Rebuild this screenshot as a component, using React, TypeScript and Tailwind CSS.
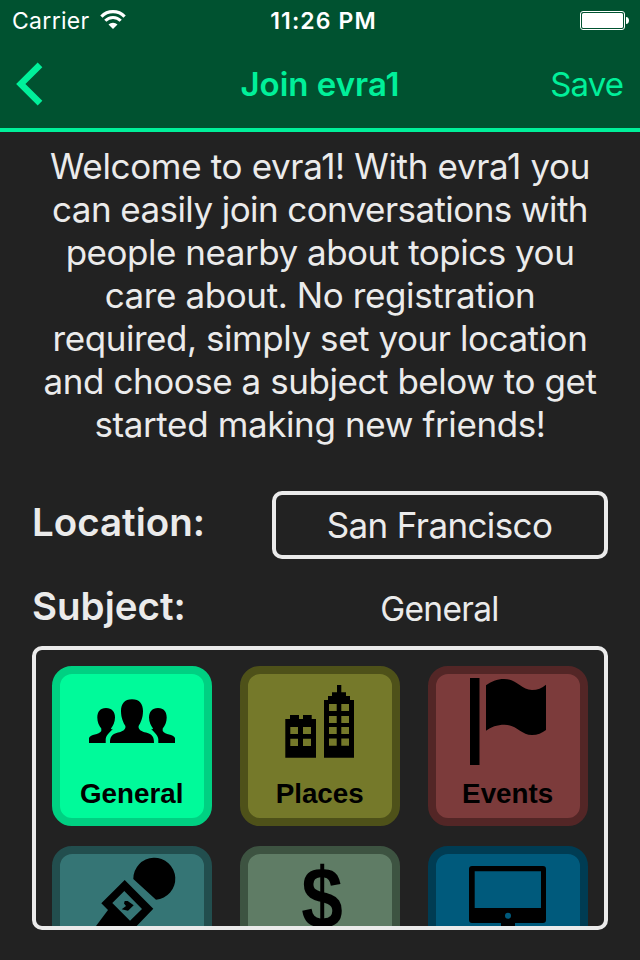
import type { ReactNode } from 'react';

type Subject = {
  label?: string;
  tile: string;
  icon: ReactNode;
};

const intro = [
  { text: 'Welcome to evra1! With evra1 you', spacing: 'tracking-[-0.34px]' },
  { text: 'can easily join conversations with', spacing: 'tracking-[-0.58px]' },
  { text: 'people nearby about topics you', spacing: 'tracking-[-0.48px]' },
  { text: 'care about. No registration', spacing: 'tracking-[-0.4px]' },
  { text: 'required, simply set your location', spacing: 'tracking-[-0.45px]' },
  { text: 'and choose a subject below to get', spacing: 'tracking-[-0.45px]' },
  { text: 'started making new friends!', spacing: 'tracking-[-0.38px]' },
];

const subjects: Subject[] = [
  {
    label: 'General',
    tile: 'bg-[#00fa9a] border-[#00d082]',
    icon: (
      <>
        <path d="M80 33.3C87.500 33.300 91 38 91 45C91 52 88.500 57 86.600 60C86 64 90 65.500 94 66.600C100.500 68.500 102 71 102 77H58C58 71 59.500 68.500 66 66.600C70 65.500 74 64 73.400 60C71.500 57 69 52 69 45C69 38 72.500 33.300 80 33.300Z" />
        <path d="M54 42C60 42 63 46 63 51.500C63 56 61 60 59 62.500C59 63.500 60.500 63.500 61.500 62C58.500 66 54.500 68 53.700 73V77H37V72C38.500 68 47 69 49.300 65V62.500C47 60 45.300 56 45.300 51.500C45.300 46 48 42 54 42Z" />
        <path d="M106 42C100 42 97 46 97 51.500C97 56 99 60 101 62.500C101 63.500 99.500 63.500 98.500 62C101.500 66 105.500 68 106.300 73V77H123V72C121.500 68 113 69 110.700 65V62.500C113 60 114.700 56 114.700 51.500C114.700 46 112 42 106 42Z" />
      </>
    ),
  },
  {
    label: 'Places',
    tile: 'bg-[#75792a] border-[#4e5119]',
    icon: (
      <path
        fillRule="evenodd"
        d="M45.300 53H50V49H59V53H63V49H71.700V53H76V91.700H45.300ZM50.300 61V68H58V61ZM63 61V68H71V61ZM50.300 72.700V80H58V72.700ZM63 72.700V80H71V72.700ZM84 34H88V30H92V26.300H97V19H101.300V26.300H106V30H110V34H114V91.700H84ZM89 38V45H96.700V38ZM101.300 38V45H109V38ZM89 50V57H96.700V50ZM101.300 50V57H109V50ZM89 61V68H96.700V61ZM101.300 61V68H109V61ZM89 72.500V79.700H96.700V72.500ZM101.300 72.500V79.700H109V72.500Z"
      />
    ),
  },
  {
    label: 'Events',
    tile: 'bg-[#7c3b3b] border-[#532626]',
    icon: (
      <>
        <rect x="42" y="12" width="9.500" height="87" />
        <path d="M58 19.300C63 15.500 69 13 76 13C89 13 93 24 104 24C109.500 24 114 22 118 18.700V64C114 67 109.500 69 104 69C93 69 89 58.700 76.500 58.700C69 58.700 63 61 58 64.700Z" />
      </>
    ),
  },
  {
    tile: 'bg-[#357575] border-[#224e4e]',
    icon: (
      <>
        <path d="M81.300 33A21 21 0 1 1 104 53.700Z" />
        <path
          fillRule="evenodd"
          d="M72.700 34L101.300 62.700L84.700 80L64 100H30L44 80L56 64L49.300 57.300ZM72.300 45L60.300 57L78 74.700L90 63Z"
        />
        <path d="M72.700 55H75.700L81.700 59.300L76 64.700L69.700 63.300L74 60L72 57.500Z" />
      </>
    ),
  },
  {
    tile: 'bg-[#5f7c65] border-[#3d5341]',
    icon: (
      <text
        transform="translate(82 83) scale(0.89 1.03)"
        textAnchor="middle"
        className="font-['Liberation_Sans',sans-serif] text-[84px] font-bold"
      >
        $
      </text>
    ),
  },
  {
    tile: 'bg-[#005a7c] border-[#003c53]',
    icon: (
      <path
        fillRule="evenodd"
        d="M44 20H115A3 3 0 0 1 118 23V74A3 3 0 0 1 115 77H87V90H73V77H44A3 3 0 0 1 41 74V23A3 3 0 0 1 44 20ZM46.700 25.300V62H113V25.300ZM80 66.700A3 3 0 1 0 80 72.700A3 3 0 1 0 80 66.700Z"
      />
    ),
  },
];

function StatusBar() {
  return (
    <div className="grid h-10 grid-cols-3 items-center text-white">
      <div className="flex items-center gap-[10px] pl-3">
        <span className="pt-0.5 text-[23px] leading-[38px] tracking-[0.3px]">Carrier</span>
        <svg width="26" height="20" viewBox="0 0 26 20" fill="none" stroke="currentColor">
          <path d="M1.400 6.700A16 16 0 0 1 24.600 6.700" strokeWidth="3.200" />
          <path d="M5.300 10.800A10.500 10.500 0 0 1 20.700 10.800" strokeWidth="3" />
          <path d="M13 19L8.500 14.600A6.200 6.200 0 0 1 17.500 14.600Z" fill="currentColor" stroke="none" />
        </svg>
      </div>
      <span className="whitespace-nowrap pl-[7px] pt-0.5 text-center text-[23px] font-semibold leading-[38px] tracking-[1.1px]">
        11:26 PM
      </span>
      <div className="flex justify-end pr-[10px] pt-px">
        <svg width="50" height="20" viewBox="0 0 50 20">
          <rect x="0.500" y="0.500" width="44" height="18" rx="2.500" fill="none" stroke="white" />
          <rect x="2" y="2" width="41" height="15" rx="1.500" fill="white" />
          <path d="M46 6C50 6 50 13 46 13Z" fill="white" />
        </svg>
      </div>
    </div>
  );
}

function SubjectTile({ label, tile, icon }: Subject) {
  return (
    <button className={`h-40 w-40 overflow-hidden rounded-[20px] border-8 ${tile}`}>
      <svg width="160" height="160" viewBox="0 0 160 160" className="-m-2 max-w-none">
        {icon}
        {label && (
          <text
            x="79.700"
            y="136.700"
            textAnchor="middle"
            className="font-['Liberation_Sans',sans-serif] text-[27.8px] font-bold"
          >
            {label}
          </text>
        )}
      </svg>
    </button>
  );
}

export default function App() {
  return (
    <div className="flex h-[960px] w-[640px] flex-col overflow-hidden bg-[#222222] font-['Inter',sans-serif] text-[#ebebeb]">
      {/* Header */}
      <header className="h-[132px] border-b-4 border-[#00f09a] bg-[#005230] text-[#00f09a]">
        <StatusBar />
        <nav className="grid h-[88px] grid-cols-3 items-center px-4">
          <svg width="28" height="44" viewBox="0 0 28 44" fill="none" stroke="currentColor">
            <path d="M24 2.800L4.800 22L24 41.200" strokeWidth="6.600" />
          </svg>
          <h1 className="text-center text-[33px] font-semibold leading-[44px]">Join evra1</h1>
          <button className="pr-px text-right text-[33px] leading-[44px] tracking-[-0.9px]">
            Save
          </button>
        </nav>
      </header>

      {/* Intro */}
      <p className="mt-[13px] text-center text-[35px] leading-[43px]">
        {intro.map((line) => (
          <span key={line.text} className={`block whitespace-nowrap ${line.spacing}`}>
            {line.text}
          </span>
        ))}
      </p>

      {/* Form */}
      <div className="mt-[45px] flex items-center justify-between px-8">
        <label className="pb-[6px] text-[38.5px] font-semibold leading-[48px]">Location:</label>
        <button className="h-[68px] w-[336px] rounded-[10px] border-4 border-[#ebebeb] pr-px text-[35px] leading-[60px] tracking-[-0.62px]">
          San Francisco
        </button>
      </div>
      <div className="mt-[23px] flex h-[50px] items-center justify-between px-8">
        <label className="pb-0.5 text-[38.5px] font-semibold leading-[48px]">Subject:</label>
        <span className="w-[336px] pr-px pt-1 text-center text-[33.5px] leading-[48px] tracking-[-0.7px]">
          General
        </span>
      </div>

      {/* Subjects */}
      <div className="mx-8 mt-[14px] h-[284px] overflow-hidden rounded-[10px] border-4 border-[#ebebeb] p-4">
        <div className="grid grid-cols-[160px_160px_160px] gap-x-7 gap-y-5">
          {subjects.map((subject, i) => (
            <SubjectTile key={i} {...subject} />
          ))}
        </div>
      </div>
    </div>
  );
}
